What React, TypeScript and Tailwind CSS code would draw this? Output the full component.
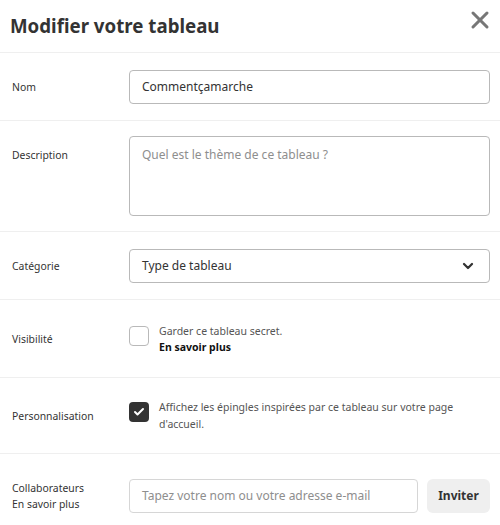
import { X, ChevronDown, Check } from "lucide-react";

const font = { fontFamily: '"Noto Sans", "Open Sans", sans-serif' };

function Row({
  label,
  children,
  className,
  top,
}: {
  label: React.ReactNode;
  children: React.ReactNode;
  className: string;
  top?: boolean;
}) {
  return (
    <div
      className={`flex ${top ? "items-start" : "items-center"} border-t border-[#efefef] pl-3 pr-[10px] ${className}`}
    >
      <div className={`w-[117px] shrink-0 text-[10.4px] leading-[16px] text-[#333] ${top ? "pt-[11px]" : ""}`}>
        {label}
      </div>
      <div className="flex-1 min-w-0">{children}</div>
    </div>
  );
}

export default function App() {
  return (
    <div className="w-[500px] h-[525px] bg-white overflow-hidden" style={font}>
      {/* Header */}
      <div className="flex items-center justify-between h-[52px] pl-[10px] pr-[6px]">
        <h1 className="text-[18.7px] font-bold text-[#333]">Modifier votre tableau</h1>
        <X className="w-[28px] h-[28px] text-[#777] self-start mt-[6px]" strokeWidth={2.6} />
      </div>

      <Row label="Nom" className="h-[68px]">
        <div className="h-[34px] rounded-[4px] border border-[#b9b9b9] flex items-center px-3 text-[12px] text-[#333]">
          Commentçamarche
        </div>
      </Row>

      <Row label="Description" className="h-[111px] pt-[15px]" top>
        <div className="h-[80px] rounded-[4px] border border-[#b9b9b9] px-3 pt-[10px] text-[12px] leading-[16px] text-[#8e8e8e]">
          Quel est le thème de ce tableau ?
        </div>
      </Row>

      <Row label="Catégorie" className="h-[68px]">
        <div className="h-[34px] rounded-[4px] border border-[#b9b9b9] flex items-center justify-between pl-3 pr-[13px] text-[12px] text-[#333]">
          <span>Type de tableau</span>
          <ChevronDown className="w-[16px] h-[16px] text-[#333]" strokeWidth={3.4} />
        </div>
      </Row>

      <Row label="Visibilité" className="h-[78px]">
        <div className="flex items-start gap-[10px]">
          <div className="w-[20px] h-[20px] mt-[3px] rounded-[4px] border border-[#b9b9b9] shrink-0" />
          <div className="text-[10.5px] leading-[16px] text-[#555]">
            <div>Garder ce tableau secret.</div>
            <div className="font-bold text-[#111]">En savoir plus</div>
          </div>
        </div>
      </Row>

      <Row label="Personnalisation" className="h-[76px]">
        <div className="flex items-start gap-[10px]">
          <div className="w-[20px] h-[20px] mt-[3px] rounded-[4px] bg-[#333] flex items-center justify-center shrink-0">
            <Check className="w-[12px] h-[12px] text-white" strokeWidth={4} />
          </div>
          <div className="text-[10.5px] leading-[17px] text-[#555] pr-[30px]">
            Affichez les épingles inspirées par ce tableau sur votre page d'accueil.
          </div>
        </div>
      </Row>

      <Row
        label={
          <>
            <div>Collaborateurs</div>
            <div>En savoir plus</div>
          </>
        }
        className="h-[85px]"
      >
        <div className="flex items-center gap-[9px]">
          <div className="flex-1 h-[34px] rounded-[4px] border border-[#d6d6d6] flex items-center px-3 text-[12px] text-[#8e8e8e] whitespace-nowrap">
            Tapez votre nom ou votre adresse e-mail
          </div>
          <button className="w-[63px] h-[34px] rounded-[6px] bg-[#efefef] text-[12px] font-bold text-[#333]">
            Inviter
          </button>
        </div>
      </Row>
    </div>
  );
}
